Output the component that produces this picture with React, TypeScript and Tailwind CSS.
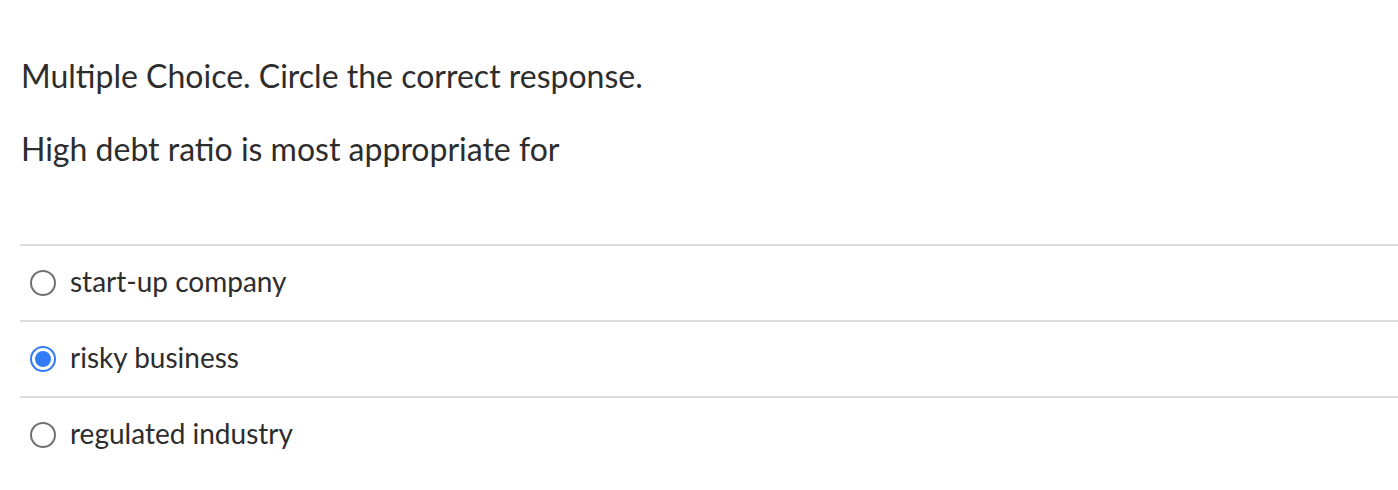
const options = [
  { id: "a", label: "start-up company" },
  { id: "b", label: "risky business" },
  { id: "c", label: "regulated industry" },
];

function Radio({ checked }: { checked: boolean }) {
  return checked ? (
    <span className="w-[26px] h-[26px] rounded-full border-[2.5px] border-[#2f7cf6] flex items-center justify-center shrink-0">
      <span className="w-[16px] h-[16px] rounded-full bg-[#2f7cf6]" />
    </span>
  ) : (
    <span className="w-[26px] h-[26px] rounded-full border-[2px] border-[#707070] shrink-0" />
  );
}

export default function App() {
  const selected = "b";
  return (
    <div className="w-[1398px] h-[490px] bg-white text-[#2d2d2d] font-['Lato','Open_Sans',sans-serif]">
      <div className="pl-[21px] pt-[56px]">
        <p className="text-[32px] leading-[40px]">Multiple Choice. Circle the correct response.</p>
        <p className="text-[32px] leading-[40px] mt-[33px]">High debt ratio is most appropriate for</p>
      </div>
      <ul className="ml-[20px] mt-[75px]">
        {options.map((o) => (
          <li
            key={o.id}
            className="h-[76px] flex items-center gap-[14px] pl-[10px] border-t-2 border-[#dcdcdc]"
          >
            <Radio checked={o.id === selected} />
            <span className="text-[28px] leading-none pb-[4px]">{o.label}</span>
          </li>
        ))}
      </ul>
    </div>
  );
}
